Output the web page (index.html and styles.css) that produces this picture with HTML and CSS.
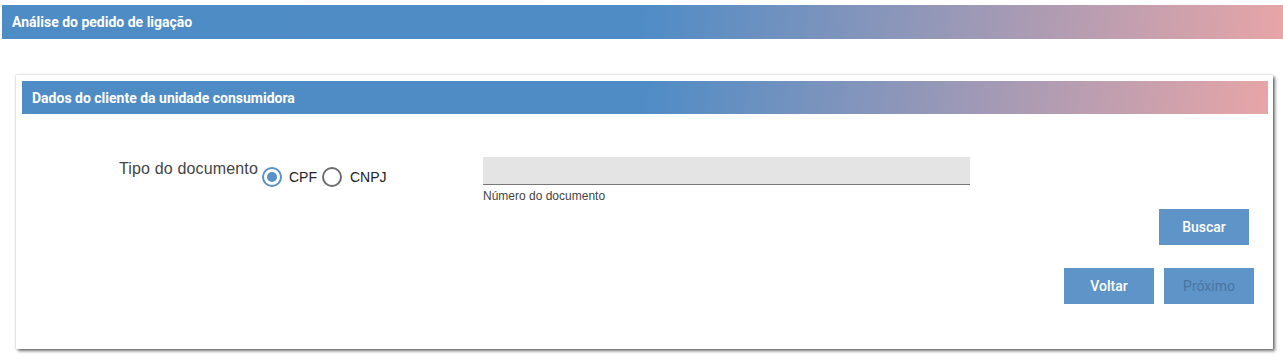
FILE: index.html
```html
<!DOCTYPE html>
<html lang="pt">
<head>
<meta charset="utf-8">
<title>Análise do pedido de ligação</title>
<link rel="stylesheet" href="styles.css">
</head>
<body>
<div class="page">
  <div class="bar page-bar">Análise do pedido de ligação</div>
  <section class="card">
    <div class="bar card-bar">Dados do cliente da unidade consumidora</div>
    <div class="card-body">
      <div class="form-row">
        <div class="doc-type">
          <span class="doc-label">Tipo do documento</span>
          <label class="radio"><input type="radio" name="tipo" checked><span class="dot"></span><span class="radio-text">CPF</span></label>
          <label class="radio"><input type="radio" name="tipo"><span class="dot"></span><span class="radio-text">CNPJ</span></label>
        </div>
        <div class="field">
          <input class="field-input" type="text">
          <span class="field-hint">Número do documento</span>
        </div>
      </div>
      <div class="search-row">
        <button class="btn">Buscar</button>
      </div>
      <div class="nav-row">
        <button class="btn">Voltar</button>
        <button class="btn btn-disabled">Próximo</button>
      </div>
    </div>
  </section>
</div>
</body>
</html>
```
FILE: styles.css
```css
html, body {
  margin: 0;
  padding: 0;
  background: #ffffff;
}
body {
  font-family: "Liberation Sans", Arial, sans-serif;
  min-height: 362px;
}
.page {
  padding: 5px 0 13px 2px;
}
.bar {
  background: linear-gradient(98deg, #4e8cc6 0%, #4f8cc6 50%, #e7a5a7 100%);
  color: #ffffff;
  font-family: Roboto, "Liberation Sans", sans-serif;
  font-weight: 700;
  font-size: 14px;
  display: flex;
  align-items: center;
  padding-left: 10px;
  box-sizing: border-box;
}
.page-bar {
  height: 34px;
}
.card {
  margin: 36px 10px 0 14px;
  padding: 6px 5px 0 6px;
  height: 274px;
  box-sizing: border-box;
  background: #fff;
  box-shadow: 2px 2px 3px rgba(0, 0, 0, 0.55), 0 0 2px rgba(0, 0, 0, 0.25);
}
.card-bar {
  height: 33px;
}
.card-body {
  padding-top: 43px;
}
.form-row {
  display: flex;
  align-items: flex-start;
}
.doc-type {
  width: 461px;
  box-sizing: border-box;
  padding-left: 97px;
  padding-top: 3px;
  display: flex;
  align-items: flex-start;
}
.doc-label {
  font-size: 16px;
  letter-spacing: 0.15px;
  color: #444;
  line-height: 18px;
  margin-right: 4px;
}
.radio {
  display: flex;
  align-items: center;
  margin-top: 7px;
  cursor: pointer;
}
.radio input {
  display: none;
}
.dot {
  width: 20px;
  height: 20px;
  box-sizing: border-box;
  border: 2px solid #6d6d6d;
  border-radius: 50%;
  display: flex;
  align-items: center;
  justify-content: center;
}
.radio input:checked + .dot {
  border-color: #5b8fc8;
}
.radio input:checked + .dot::after {
  content: "";
  width: 10px;
  height: 10px;
  border-radius: 50%;
  background: #5b8fc8;
}
.radio-text {
  font-size: 14px;
  color: #222;
  margin: 0 5px 0 7px;
}
.radio + .radio .radio-text {
  margin-left: 8px;
}
.field {
  display: flex;
  flex-direction: column;
  width: 487px;
}
.field-input {
  height: 28px;
  box-sizing: border-box;
  border: 0;
  border-bottom: 1px solid #777;
  background: #e4e4e4;
  margin: 0;
  padding: 0 6px;
}
.field-hint {
  font-size: 12px;
  color: #444;
  margin-top: 4px;
}
.search-row {
  display: flex;
  justify-content: flex-end;
  padding-right: 19px;
  margin-top: 6px;
}
.nav-row {
  display: flex;
  justify-content: flex-end;
  gap: 10px;
  padding-right: 14px;
  margin-top: 23px;
}
.btn {
  width: 90px;
  height: 36px;
  border: 0;
  margin: 0;
  background: #5e94c8;
  color: #ffffff;
  font-family: Roboto, "Liberation Sans", sans-serif;
  font-weight: 500;
  font-size: 14px;
  cursor: pointer;
}
.btn-disabled {
  color: #4a75a2;
  font-weight: 400;
  cursor: default;
}
```
